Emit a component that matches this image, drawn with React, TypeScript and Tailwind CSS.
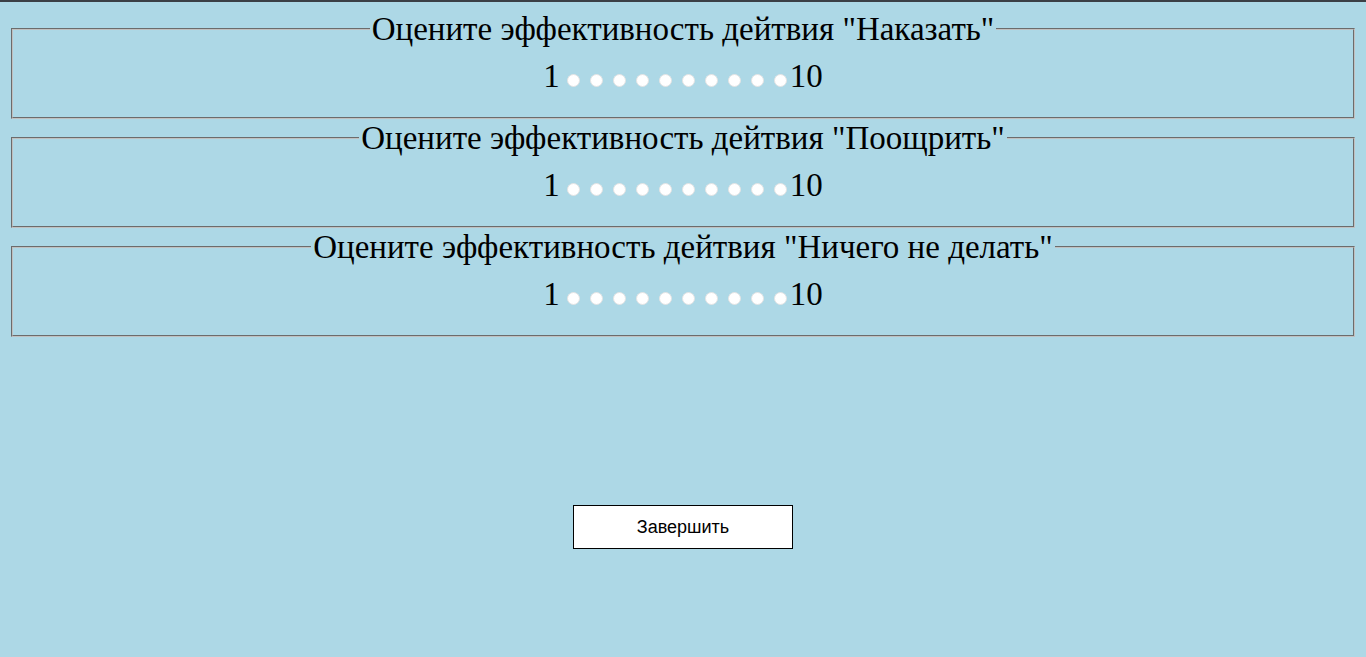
import React from "react";

const items = ["Наказать", "Поощрить", "Ничего не делать"];

function Rating({ title }: { title: string }) {
  return (
    <fieldset className="mx-[11px] mt-[2px] border-2 border-[#c0c0c0] [border-style:groove] px-3 pt-[11px] pb-[22px]">
      <legend className="mx-auto px-[2px] text-[33px] leading-[34px] text-black">
        Оцените эффективность дейтвия "{title}"
      </legend>
      <div className="flex items-baseline justify-center text-[33px] leading-[38px] text-black">
        <span>1</span>
        <div className="ml-[7px] mr-[3px] flex items-baseline gap-[10px]">
          {Array.from({ length: 10 }).map((_, i) => (
            <span
              key={i}
              className="inline-block h-[13px] w-[13px] rounded-full border border-[#e4e4e4] bg-white"
            />
          ))}
        </div>
        <span>10</span>
      </div>
    </fieldset>
  );
}

export default function App() {
  return (
    <div
      className="min-h-[657px] bg-[#add8e6]"
      style={{ fontFamily: '"Liberation Serif", "Times New Roman", serif' }}
    >
      <div className="h-[2px] bg-[#3b3f46]" />
      <div className="pt-[8px]">
        {items.map((t) => (
          <Rating key={t} title={t} />
        ))}
      </div>
      <div className="mt-[168px] flex justify-center">
        <button
          className="h-[44px] w-[220px] border border-black bg-white text-[18px] text-black"
          style={{ fontFamily: '"Liberation Sans", Arial, sans-serif' }}
        >
          Завершить
        </button>
      </div>
    </div>
  );
}
